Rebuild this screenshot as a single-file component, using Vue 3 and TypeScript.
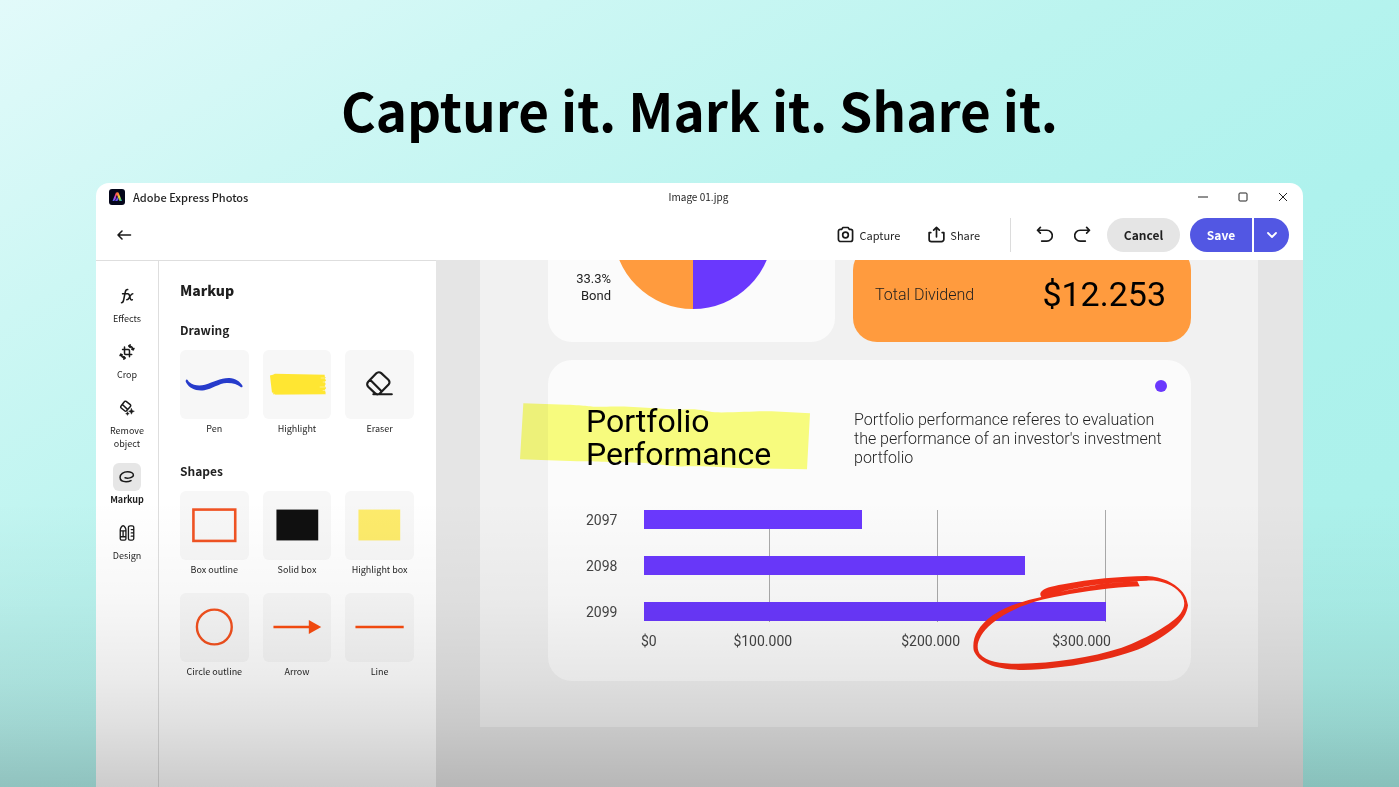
<script setup lang="ts">
import { ref } from 'vue'

interface Item {
  id: string
  label: string
}

const active = ref('markup')

const rail: Item[] = [
  { id: 'effects', label: 'Effects' },
  { id: 'crop', label: 'Crop' },
  { id: 'remove', label: 'Remove object' },
  { id: 'markup', label: 'Markup' },
  { id: 'design', label: 'Design' },
]

const drawing: Item[] = [
  { id: 'pen', label: 'Pen' },
  { id: 'highlight', label: 'Highlight' },
  { id: 'eraser', label: 'Eraser' },
]

const shapes: Item[] = [
  { id: 'box', label: 'Box outline' },
  { id: 'solid', label: 'Solid box' },
  { id: 'hbox', label: 'Highlight box' },
  { id: 'circle', label: 'Circle outline' },
  { id: 'arrow', label: 'Arrow' },
  { id: 'line', label: 'Line' },
]

const bars = [
  { year: '2097', share: 47.2 },
  { year: '2098', share: 82.5 },
  { year: '2099', share: 100 },
]

const gridLines = [27, 63.4, 99.8]
const axis = ['$0', '$100.000', '$200.000', '$300.000']
</script>

<template>
  <main class="page">
    <h1 class="headline">Capture it. Mark it. Share it.</h1>

    <section class="window">
      <header class="titlebar">
        <div class="app-name">
          <svg class="logo" viewBox="0 0 32 32" aria-hidden="true">
            <defs>
              <linearGradient id="logo-left" x1="0" y1="1" x2="1" y2="0">
                <stop offset="0" stop-color="#3f6bff" />
                <stop offset="0.4" stop-color="#b04be8" />
                <stop offset="0.7" stop-color="#ff4a5e" />
                <stop offset="1" stop-color="#ff8a2a" />
              </linearGradient>
              <linearGradient id="logo-right" x1="0" y1="0" x2="1" y2="1">
                <stop offset="0" stop-color="#ff5a3c" />
                <stop offset="0.5" stop-color="#f5d63c" />
                <stop offset="0.8" stop-color="#46c86a" />
                <stop offset="1" stop-color="#2f8cff" />
              </linearGradient>
            </defs>
            <rect width="32" height="32" rx="6" fill="#04061a" />
            <path d="M14 7h4l-4 9-1 5-3 3H7z" fill="url(#logo-left)" />
            <path d="M16 7h3l7 17h-5l-5-12z" fill="url(#logo-right)" />
            <path d="M10 24c5 0 5-5 6-9l3 6c-1 2-3 3-5 3z" fill="#6a56f5" />
          </svg>
          <span>Adobe Express Photos</span>
        </div>
        <span class="file-name">Image 01.jpg</span>
        <div class="win-controls">
          <button type="button" aria-label="Minimize">
            <svg viewBox="0 0 10 10"><path d="M0 5h10" /></svg>
          </button>
          <button type="button" aria-label="Maximize">
            <svg viewBox="0 0 10 10"><rect x="1" y="1" width="8" height="8" rx="1" /></svg>
          </button>
          <button type="button" aria-label="Close">
            <svg viewBox="0 0 10 10"><path d="M1 1l8 8M9 1l-8 8" /></svg>
          </button>
        </div>
      </header>

      <div class="toolbar">
        <button type="button" class="icon-btn" aria-label="Back">
          <svg class="ic-back" viewBox="0 0 16 16"><path d="M14.500 8H2M6 4L2 8l4 4" /></svg>
        </button>
        <div class="actions">
          <button type="button" class="text-btn">
            <svg viewBox="0 0 18 18">
              <path d="M6.300 1.600h5.400l1.500 2h1.300a2 2 0 0 1 2 2v8.300a2.500 2.500 0 0 1-2.500 2.500H4a2.500 2.500 0 0 1-2.500-2.500V5.600a2 2 0 0 1 2-2h1.300z" />
              <circle cx="9" cy="9.500" r="3" />
            </svg>
            <span>Capture</span>
          </button>
          <button type="button" class="text-btn">
            <svg viewBox="0 0 18 18">
              <path d="M3 7H1.200v7a2.500 2.500 0 0 0 2.500 2.500h10.600a2.500 2.500 0 0 0 2.500-2.500V7H15M9 11.500V1.500M6 4.400l3-3 3 3" />
            </svg>
            <span>Share</span>
          </button>
          <span class="divider"></span>
          <button type="button" class="icon-btn" aria-label="Undo">
            <svg viewBox="0 0 18 18"><path d="M1.800 4.500h9.700a5.600 5.600 0 0 1 0 11.500H6M4.600 1.500l-3 3 3 3" /></svg>
          </button>
          <button type="button" class="icon-btn redo" aria-label="Redo">
            <svg viewBox="0 0 18 18"><path d="M16.200 4.500H6.500a5.600 5.600 0 0 0 0 11.500H12M13.400 1.500l3 3-3 3" /></svg>
          </button>
          <button type="button" class="cancel">Cancel</button>
          <div class="save-group">
            <button type="button" class="save">Save</button>
            <button type="button" class="save-more" aria-label="Save options">
              <svg viewBox="0 0 12 12"><path d="M2 4l4 4 4-4" /></svg>
            </button>
          </div>
        </div>
      </div>

      <div class="body">
        <nav class="rail">
          <button
            v-for="item in rail"
            :key="item.id"
            type="button"
            class="rail-item"
            :class="{ active: active === item.id }"
            @click="active = item.id"
          >
            <span class="rail-icon">
              <svg v-if="item.id === 'effects'" viewBox="0 0 18 18">
                <path d="M2.800 16.500c1.600 0 2-1 2.400-3L7 4.800c.4-2 1-3.200 2.800-3M4 6.500h4.600M9.500 6.500c1.600-.4 2 .6 2.600 3 .7 3 1.200 4.300 2.900 3.800M15.500 6.500c-1.600 0-2.400 1.700-3.300 3.200-.9 1.700-1.700 3.600-3.500 3.600" />
              </svg>
              <svg v-else-if="item.id === 'crop'" viewBox="0 0 18 18">
                <path d="M6.200 3.500v7a1.300 1.300 0 0 0 1.300 1.300h6.800M4 6.200h6.500a1.300 1.300 0 0 1 1.300 1.300v6.800M11.500 2.200c2.500.3 4 1.800 4.500 4.300M12.600 1l-1.600 1.200 1.500 1.600M16.800 5l-.8 1.700-1.700-1M6.500 15.800c-2.500-.3-4-1.800-4.500-4.300M5.400 17L7 15.800l-1.500-1.600M1.200 13l.8-1.700 1.700 1" />
              </svg>
              <svg v-else-if="item.id === 'remove'" viewBox="0 0 18 18">
                <path d="M8 1.600l4.700 3.600a1.400 1.400 0 0 1 .1 2L8.500 12a1.600 1.600 0 0 1-2.200.1L2.500 9a1.500 1.500 0 0 1-.2-2.200L6 1.900a1.400 1.400 0 0 1 2-.3zM3.800 5l5.800 5.500" />
                <path class="solid" d="M14 9.500l1 2.200 2.300 1-2.300 1-1 2.300-1-2.300-2.200-1 2.200-1zM9.500 13.300l.6 1.400 1.400.6-1.400.6-.6 1.400-.6-1.400-1.400-.6 1.400-.6z" />
              </svg>
              <svg v-else-if="item.id === 'markup'" viewBox="0 0 18 18">
                <path d="M6.800 9.900c2.500.9 9 .3 9.400-3 .2-2.500-3-3.800-6.600-3.800C5 3.100 1.200 5.800 1.200 9.400c0 3.100 2.900 5 6.700 5 2.200 0 4.200-.5 5.600-1.300" />
              </svg>
              <svg v-else viewBox="0 0 18 18" class="thin">
                <path d="M1.400 5.600c0-1.200 1.500-4.800 3.200-4.800s3.200 3.600 3.200 4.800V15.400a1.600 1.600 0 0 1-1.600 1.600H3A1.600 1.600 0 0 1 1.400 15.400zM1.400 13.200h6.400M1.400 6.600h6.400M4.600 6.600v6.600M12.400.900h2.400A1.800 1.800 0 0 1 16.600 2.700v12.500a1.800 1.800 0 0 1-1.800 1.800h-2.400a1.800 1.800 0 0 1-1.800-1.800v-12.500A1.800 1.800 0 0 1 12.400.900zM16 5.200h-2.200M16 8.900h-2.200M16 12.600h-2.200" />
              </svg>
            </span>
            <span class="rail-label">{{ item.label }}</span>
          </button>
        </nav>

        <aside class="panel">
          <h2>Markup</h2>
          <h3>Drawing</h3>
          <div class="tools">
            <button v-for="t in drawing" :key="t.id" type="button" class="tool">
              <span class="tile">
                <svg viewBox="0 0 69 69">
                  <path v-if="t.id === 'pen'" fill="#263bcb" d="M6.500 29.500c1.300-.2 1.600 1.600 3 2.800 4 3.300 10 3.900 15.500 2.500C34 32.200 40 28 49 28c6.500-.2 11.500 3.800 13.800 7.800.4 1.700-1.200 2-2.200 1-3-2.600-7.600-4-13.600-3.800C39 33.400 32 39 24.500 40.300 16.500 41.500 9 38.500 6 32.300c-.5-1-.3-2.500.5-2.800z" />
                  <template v-else-if="t.id === 'highlight'">
                    <path fill="#ffe632" d="M7 25.500l3-.8 2-1 50 1v1.800l1 1-1 1.500 1.500 1-1.500 2 1 2-1 2 1.500 2-1.500 2 1 2.500-1 1.500-49.500.5-2-1.800-1.500-.2z" />
                    <path stroke="#ffe632" stroke-width="1" d="M10 43.800h53" />
                    <path stroke="#fff8c0" stroke-width="0.600" d="M58 28h4M60 32h3M57 37h6M60 40.500h3" />
                  </template>
                  <g v-else fill="none" stroke="#1c1c1c" stroke-width="2.200" stroke-linejoin="round" stroke-linecap="round">
                    <path d="M31.500 23.300a3.500 3.500 0 0 1 4.900-.2l7.200 6.600a3.500 3.500 0 0 1 .2 4.900l-8.600 8.700a3.500 3.500 0 0 1-4.900.1l-7-6.700a3.500 3.500 0 0 1 0-4.900zM25.500 30L37 41.500M28.500 44.300h18.500" />
                  </g>
                </svg>
              </span>
              <span class="tool-label">{{ t.label }}</span>
            </button>
          </div>
          <h3 class="second">Shapes</h3>
          <div class="tools">
            <button v-for="t in shapes" :key="t.id" type="button" class="tool">
              <span class="tile">
                <svg viewBox="0 0 69 69">
                  <rect v-if="t.id === 'box'" x="13.500" y="18.500" width="42" height="31.500" fill="none" stroke="#f05323" stroke-width="2.600" />
                  <rect v-else-if="t.id === 'solid'" x="13.500" y="18.500" width="42" height="31" fill="#101010" />
                  <rect v-else-if="t.id === 'hbox'" x="13.500" y="18.500" width="42" height="31" fill="#fdeb6b" />
                  <circle v-else-if="t.id === 'circle'" cx="34.500" cy="34" r="17.500" fill="none" stroke="#f4511e" stroke-width="2.400" />
                  <template v-else-if="t.id === 'arrow'">
                    <path d="M10.500 34h38" stroke="#fb4d10" stroke-width="2.400" />
                    <path d="M46 27l12.500 7-12.500 7z" fill="#fb4d10" />
                  </template>
                  <path v-else d="M10.500 34h48.500" stroke="#fb4d10" stroke-width="2.400" />
                </svg>
              </span>
              <span class="tool-label">{{ t.label }}</span>
            </button>
          </div>
        </aside>

        <div class="canvas">
          <div class="sheet">
            <div class="top-cards">
              <div class="card pie-card">
                <p>33.3%<br />Bond</p>
                <svg class="pie" viewBox="0 0 164 164" aria-hidden="true">
                  <path d="M82 0a82 82 0 0 0 0 164z" fill="#ff9b3e" />
                  <path d="M82 0a82 82 0 0 1 0 164z" fill="#6a38fd" />
                </svg>
              </div>
              <div class="card dividend">
                <span>Total Dividend</span>
                <strong>$12.253</strong>
              </div>
            </div>

            <div class="card performance">
              <span class="dot"></span>
              <svg class="marker" viewBox="0 0 870 204" aria-hidden="true">
                <path fill="#fbff80" d="M10 4l130 4c70 2 70 8 120 6 90-2 160 8 225 9 60-4 70 6 100 8 70 1 120-4 170-3l115 6-9 168-160-3c-90-1-130-8-200-6-60 2-80-10-150-11-90 0-130-5-180-4L0 172z" />
              </svg>
              <div class="perf-head">
                <h2>Portfolio Performance</h2>
                <p>Portfolio performance referes to evaluation the performance of an investor's investment portfolio</p>
              </div>
              <div class="chart">
                <div class="years">
                  <span v-for="b in bars" :key="b.year">{{ b.year }}</span>
                </div>
                <div class="plot">
                  <i v-for="g in gridLines" :key="g" class="grid-line" :style="{ left: g + '%' }"></i>
                  <div v-for="b in bars" :key="b.year" class="bar" :style="{ width: b.share + '%' }"></div>
                </div>
              </div>
              <div class="axis">
                <span v-for="a in axis" :key="a">{{ a }}</span>
              </div>
              <svg class="scribble" viewBox="90 250 666 300" aria-hidden="true">
                <path
                  fill="#f62f16"
                  fill-rule="evenodd"
                  d="M303 307C312 296 330 291 370 284C450 268 540 260 620 259C668 262 700 278 724 303C738 318 741 332 744 347C738 396 685 436 610 473C530 508 380 538 250 541C170 540 115 522 101 482C96 448 110 412 158 377C205 347 255 333 304 322C300 316 300 311 303 307ZM360 307C420 292 500 278 592 275L599 290C510 294 440 304 360 319C280 332 200 362 155 402C115 436 105 470 119 492C140 516 180 522 235 522C345 520 450 504 545 474C630 442 695 402 721 372C738 350 738 325 712 301C685 278 650 271 620 273C520 275 440 288 360 307Z"
                />
              </svg>
            </div>
          </div>
        </div>
      </div>
    </section>
    <div class="shade"></div>
  </main>
</template>

<style>
body {
  margin: 0;
}
</style>

<style scoped>
* {
  box-sizing: border-box;
}
h1,
h2,
h3,
p {
  margin: 0;
}
button {
  border: 0;
  padding: 0;
  background: none;
  color: inherit;
  font: inherit;
  cursor: pointer;
}
svg {
  display: block;
}
.page {
  position: relative;
  min-height: 100vh;
  display: flex;
  flex-direction: column;
  background: linear-gradient(150deg, #e2fafa 0%, #cdf7f4 20%, #bbf4ef 40%, #aef2ed 60%, #aaf0e9 100%);
  font-family: 'Noto Sans CJK SC', 'Noto Sans', sans-serif;
  color: #1f1f1f;
}
.headline {
  padding: 65px 0 30px;
  font-size: 53px;
  line-height: 88px;
  font-weight: 700;
  text-align: center;
  color: #000;
}
.window {
  flex: 1;
  display: flex;
  flex-direction: column;
  margin: 0 96px;
  border-radius: 13px 13px 0 0;
  background: #fff;
  overflow: hidden;
}
.titlebar {
  display: grid;
  grid-template-columns: 1fr auto 1fr;
  align-items: center;
  height: 28px;
  padding: 0 15px 0 13px;
  font-size: 11px;
  line-height: 16px;
}
.app-name {
  display: flex;
  align-items: center;
  gap: 8px;
  font-weight: 500;
}
.file-name {
  font-size: 10px;
}
.logo {
  width: 16px;
  height: 16px;
}
.win-controls {
  display: flex;
  justify-content: flex-end;
  gap: 30px;
}
.win-controls svg {
  width: 10px;
  height: 10px;
  fill: none;
  stroke: #222;
  stroke-width: 1;
}
.toolbar {
  display: flex;
  align-items: center;
  justify-content: space-between;
  height: 49px;
  padding: 0 14px 2px 20px;
  font-size: 11px;
}
.toolbar svg {
  width: 17px;
  height: 17px;
  fill: none;
  stroke: #1a1a1a;
  stroke-width: 1.800;
  stroke-linecap: round;
  stroke-linejoin: round;
}
.toolbar .ic-back {
  width: 16px;
  height: 16px;
  stroke-width: 1.600;
}
.actions {
  display: flex;
  align-items: center;
}
.text-btn {
  display: flex;
  align-items: center;
  gap: 5px;
  margin-right: 28px;
  line-height: 16px;
}
.divider {
  width: 1px;
  height: 34px;
  margin: 0 25px 0 2px;
  background: #dcdcdc;
}
.redo {
  margin: 0 16px 0 21px;
}
.cancel {
  width: 73px;
  height: 34px;
  margin-right: 10px;
  border-radius: 17px;
  background: #e5e5e5;
  font-size: 12px;
  line-height: 34px;
  font-weight: 700;
}
.save-group {
  display: flex;
  gap: 2px;
  color: #fff;
}
.save {
  width: 62px;
  height: 34px;
  border-radius: 17px 0 0 17px;
  background: #5257e3;
  font-size: 12px;
  line-height: 34px;
  font-weight: 700;
}
.save-more {
  display: grid;
  place-items: center;
  width: 35px;
  height: 34px;
  border-radius: 0 17px 17px 0;
  background: #5257e3;
}
.toolbar .save-more svg {
  width: 12px;
  height: 12px;
  stroke: #fff;
}
.body {
  flex: 1;
  display: flex;
}
.rail {
  display: flex;
  flex-direction: column;
  gap: 13px;
  width: 63px;
  padding: 21px 0;
  border-top: 1px solid #dedede;
  border-right: 1px solid #dedede;
}
.rail-item {
  display: flex;
  flex-direction: column;
  align-items: center;
  gap: 2px;
  font-size: 9px;
  line-height: 13px;
}
.rail-icon {
  display: grid;
  place-items: center;
  width: 28px;
  height: 28px;
  border-radius: 6px;
}
.rail-icon svg {
  width: 16px;
  height: 16px;
  fill: none;
  stroke: #1a1a1a;
  stroke-width: 1.700;
  stroke-linecap: round;
  stroke-linejoin: round;
}
.rail-icon .thin {
  stroke-width: 1.500;
}
.rail-icon .solid {
  fill: #1a1a1a;
  stroke-width: 0.500;
}
.rail-label {
  width: 40px;
}
.active .rail-icon {
  background: #e6e6e6;
}
.active .rail-label {
  font-weight: 700;
}
.panel {
  width: 277px;
  padding: 19px 22px 0 21px;
  border-top: 1px solid #dedede;
}
.panel h2 {
  font-size: 14px;
  line-height: 20px;
  font-weight: 900;
}
.panel h3 {
  margin: 20px 0 10px;
  font-size: 12px;
  line-height: 20px;
  font-weight: 700;
}
.panel h3.second {
  margin-top: 26px;
}
.tools {
  display: grid;
  grid-template-columns: repeat(3, 1fr);
  gap: 17px 14px;
}
.tool {
  display: flex;
  flex-direction: column;
  gap: 3px;
  font-size: 9px;
  line-height: 13px;
}
.tile {
  width: 100%;
  border-radius: 6px;
  background: #f7f7f7;
}
.tile svg {
  width: 100%;
  height: 69px;
}
.tool-label {
  width: 100%;
  text-align: center;
  white-space: nowrap;
}
.canvas {
  flex: 1;
  padding: 0 45px 0 44px;
  background: #e5e5e5;
  overflow: hidden;
}
.sheet {
  margin-top: -122px;
  padding: 0 67px 46px 68px;
  background: #f1f1f1;
  font-family: Roboto, 'Open Sans', sans-serif;
}
.card {
  border-radius: 24px;
  background: #fbfbfb;
}
.top-cards {
  display: grid;
  grid-template-columns: 287fr 338fr;
  align-items: end;
  gap: 18px;
}
.pie-card {
  display: flex;
  align-items: flex-end;
  gap: 2px;
  height: 204px;
  padding: 0 0 33px 20px;
}
.pie-card p {
  width: 43px;
  margin-bottom: 5px;
  font-size: 13px;
  line-height: 17px;
  text-align: right;
}
.pie {
  width: 160px;
  height: 160px;
}
.dividend {
  display: flex;
  align-items: center;
  justify-content: space-between;
  height: 96px;
  padding: 0 25px 0 22px;
  background: #ff9b3e;
  font-size: 16px;
  font-weight: 300;
}
.dividend strong {
  color: #000;
  font-size: 34px;
  font-weight: 400;
}
.performance {
  position: relative;
  margin-top: 18px;
  padding: 45px 30px 30px 38px;
}
.dot {
  position: absolute;
  top: 20px;
  right: 24px;
  width: 12px;
  height: 12px;
  border-radius: 50%;
  background: #6a38fd;
}
.marker {
  position: absolute;
  top: 42px;
  left: -28px;
  width: 290px;
  height: 68px;
  mix-blend-mode: multiply;
}
.perf-head {
  position: relative;
  display: grid;
  grid-template-columns: 268fr 307fr;
}
.perf-head h2 {
  width: 200px;
  color: #000;
  font-size: 32px;
  line-height: 33px;
  font-weight: 400;
}
.perf-head p {
  margin-right: -16px;
  padding-top: 5px;
  font-size: 16px;
  line-height: 19px;
  font-weight: 300;
}
.chart {
  display: flex;
  margin-top: 39px;
  padding-right: 55px;
}
.years {
  display: flex;
  flex-direction: column;
  gap: 26px;
  width: 58px;
  color: #444;
  font-size: 14px;
  line-height: 20px;
}
.plot {
  position: relative;
  flex: 1;
  display: flex;
  flex-direction: column;
  gap: 27px;
}
.bar {
  position: relative;
  height: 19px;
  background: #6a38fd;
}
.grid-line {
  position: absolute;
  top: 0;
  bottom: 0;
  width: 1px;
  background: #aaa;
}
.axis {
  display: grid;
  grid-template-columns: 93fr 169fr 152fr 56fr;
  margin: 9px 50px 0 55px;
  color: #444;
  font-size: 14px;
  line-height: 20px;
}
.scribble {
  position: absolute;
  right: -1px;
  bottom: 8px;
  width: 222px;
  height: 100px;
}
.shade {
  position: absolute;
  inset: 500px 0 0;
  pointer-events: none;
  background: linear-gradient(rgba(0, 0, 0, 0), rgba(0, 0, 0, 0.03) 35%, rgba(0, 0, 0, 0.08) 62%, rgba(0, 0, 0, 0.12) 78%, rgba(0, 0, 0, 0.200));
}
</style>
